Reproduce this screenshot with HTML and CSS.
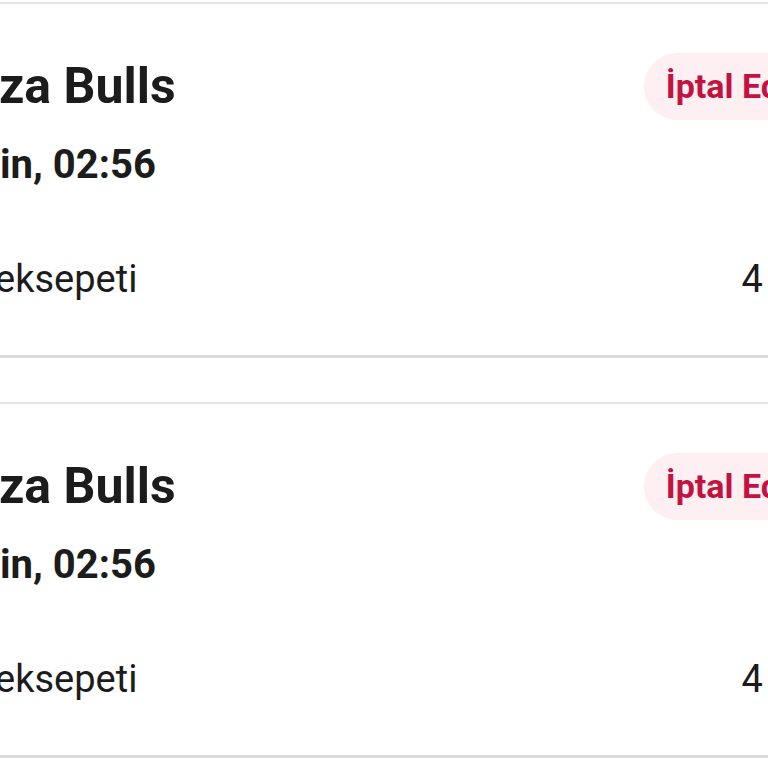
FILE: index.html
```html
<!DOCTYPE html>
<html>
  <head>
    <title>Siparişlerim</title>
    <meta charset='utf-8'>
    <link rel="stylesheet" href="styles.css">
  </head>
  <body>
    <div class='orders'>
      <div class='order'>
        <div class='order-head'>
          <div class='shop'>Pizza Bulls</div>
          <div class='status'>İptal Edildi</div>
        </div>
        <div class='when'>in, 02:56</div>
        <div class='order-foot'>
          <div class='source'>Yemeksepeti</div>
          <div class='count'>4 ürün</div>
        </div>
      </div>
      <div class='order'>
        <div class='order-head'>
          <div class='shop'>Pizza Bulls</div>
          <div class='status'>İptal Edildi</div>
        </div>
        <div class='when'>in, 02:56</div>
        <div class='order-foot'>
          <div class='source'>Yemeksepeti</div>
          <div class='count'>4 ürün</div>
        </div>
      </div>
    </div>
  </body>
</html>
```

FILE: styles.css
```css
html, body {
  margin: 0;
  padding: 0;
  background: #fff;
  overflow: hidden;
}

body {
  font-family: Roboto, "Liberation Sans", Arial, sans-serif;
  color: #1c1c1c;
  padding-top: 2px;
}

.orders {
  width: 914px;
  margin-left: -66px;
}

/* One order card. */
.order {
  border-top: 2px solid #e4e4e4;
  border-bottom: 3px solid #dadada;
  padding: 49px 0 54px 0;
  margin-bottom: 44px;
}

.order-head {
  display: flex;
  justify-content: space-between;
  align-items: flex-start;
}

.shop {
  margin: 4px 0 0 -6px;
  font-size: 50px;
  font-weight: 700;
  line-height: 58px;
}

.status {
  height: 67px;
  line-height: 67px;
  padding: 0 22px;
  border-radius: 34px;
  background: #fdeff2;
  color: #c3123f;
  font-size: 34px;
  font-weight: 700;
}

.when {
  margin-top: 22px;
  margin-left: 66px;
  font-size: 40px;
  font-weight: 700;
  line-height: 46px;
}

.order-foot {
  display: flex;
  justify-content: space-between;
  margin-top: 69px;
  font-size: 38px;
  line-height: 44px;
}

.source {
  margin-left: -14px;
}
```
